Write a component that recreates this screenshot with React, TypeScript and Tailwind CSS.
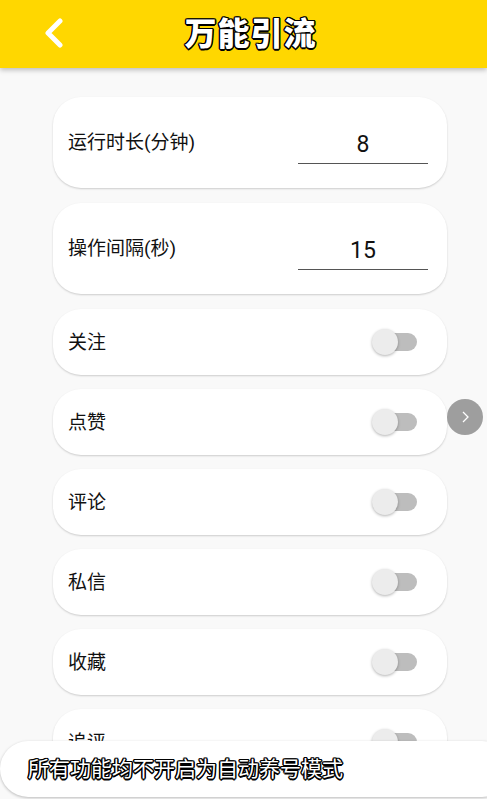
import React, { useState } from 'react';

const outline =
  '[text-shadow:1.5px_0_0_#000,-1.5px_0_0_#000,0_1.5px_0_#000,0_-1.5px_0_#000,1px_1px_0_#000,-1px_-1px_0_#000,1px_-1px_0_#000,-1px_1px_0_#000]';

function InputCard({ label, value }: { label: string; value: string }) {
  return (
    <div className="flex h-[91px] items-center justify-between rounded-[28px] bg-white pl-[15px] pr-[19px] shadow-[0_1px_2px_rgba(0,0,0,0.18)]">
      <span className="pt-[2px] text-[19px] text-[#111]">{label}</span>
      <div className="mt-[6px] flex h-[36px] w-[130px] items-center justify-center border-b border-[#555] text-[23px] text-[#111]">
        {value}
      </div>
    </div>
  );
}

function Toggle() {
  const [on, setOn] = useState(false);
  return (
    <button onClick={() => setOn(!on)} className="relative h-[26px] w-[46px]">
      <span className={`absolute left-[3px] top-[4px] h-[18px] w-[42px] rounded-full ${on ? 'bg-[#ffe57a]' : 'bg-[#bdbdbd]'}`} />
      <span
        className={`absolute top-0 h-[26px] w-[26px] rounded-full shadow-[0_1px_3px_rgba(0,0,0,0.3)] ${on ? 'left-[20px] bg-[#ffd600]' : 'left-0 bg-[#ececec]'}`}
      />
    </button>
  );
}

function ToggleCard({ label }: { label: string }) {
  return (
    <div className="flex h-[66px] shrink-0 items-center justify-between rounded-[28px] bg-white pl-[15px] pr-[29px] shadow-[0_1px_2px_rgba(0,0,0,0.18)]">
      <span className="pt-[2px] text-[19px] text-[#111]">{label}</span>
      <Toggle />
    </div>
  );
}

export default function App() {
  const toggles = ['关注', '点赞', '评论', '私信', '收藏', '追评'];

  return (
    <div className="relative h-[799px] w-full overflow-hidden bg-[#f9f9f9] font-['Roboto','Noto_Sans_CJK_SC',sans-serif]">
      <div className="relative z-10 flex h-[68px] items-center justify-center bg-[#ffd700] pl-[14px] shadow-[0_2px_5px_rgba(0,0,0,0.25)]">
        <svg className="absolute left-[42px] top-[18px]" width="24" height="30" viewBox="0 0 24 30">
          <path d="M18 3 L6 15 L18 27" fill="none" stroke="#fff" strokeWidth="5" strokeLinecap="round" strokeLinejoin="round" />
        </svg>
        <h1 className={`text-[32px] font-black tracking-[1px] text-white ${outline}`}>万能引流</h1>
      </div>

      <div className="flex flex-col gap-[15px] pl-[53px] pr-[40px] pt-[29px]">
        <InputCard label="运行时长(分钟)" value="8" />
        <InputCard label="操作间隔(秒)" value="15" />
        <div className="flex flex-col gap-[14px]">
          {toggles.map((t) => (
            <ToggleCard key={t} label={t} />
          ))}
        </div>
      </div>

      <button className="absolute left-[447px] top-[399px] flex h-[36px] w-[36px] items-center justify-center rounded-full bg-[#9e9e9e]">
        <svg width="14" height="14" viewBox="0 0 14 14">
          <path d="M5 2 L10 7 L5 12" fill="none" stroke="#fff" strokeWidth="1.3" />
        </svg>
      </button>

      <div className="absolute left-0 top-[741px] flex h-[56px] w-[510px] items-center rounded-[28px] bg-white pl-[28px] pt-[2px] shadow-[0_1px_3px_rgba(0,0,0,0.25)]">
        <span className={`text-[21px] text-white ${outline}`}>所有功能均不开启为自动养号模式</span>
      </div>
    </div>
  );
}
